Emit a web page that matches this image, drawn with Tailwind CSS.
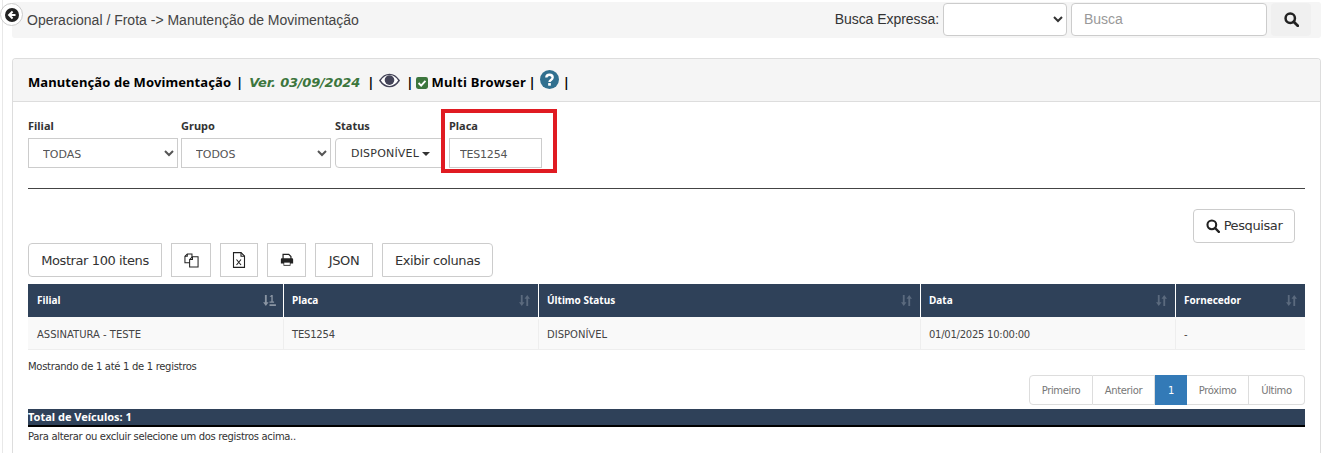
<!DOCTYPE html>
<html lang="pt-BR">
<head>
    <meta charset="UTF-8">
    <title>Manutenção de Movimentação</title>
    <script src="https://cdn.jsdelivr.net/npm/@tailwindcss/browser@4"></script>
</head>
<body class="bg-white h-[453px] overflow-hidden font-['DejaVu_Sans',sans-serif] text-[#333] relative">
    <!-- Linha lateral -->
    <div class="absolute left-[2px] top-0 bottom-0 w-px bg-[#e8e8e8]"></div>

    <!-- Botão voltar -->
    <div class="absolute left-0 top-[3px] w-[23px] h-[23px] rounded-full bg-white border border-[#ccc] flex items-center justify-center z-10">
        <svg viewBox="0 0 24 24" class="w-[14px] h-[14px]"><circle cx="12" cy="12" r="12" fill="#222"/><path d="M13 6 7 12l6 6M7.500 12H18" fill="none" stroke="#fff" stroke-width="3.400"/></svg>
    </div>

    <!-- Barra superior -->
    <div class="ml-[12px] mr-[4px] pt-[2px]">
        <div class="h-[36px] bg-[#f5f5f5] rounded-[3px] flex items-center justify-between pl-[15px] pr-[10px] font-['Liberation_Sans',sans-serif]">
            <span class="text-[14px] text-[#444]">Operacional / Frota -&gt; Manutenção de Movimentação</span>
            <div class="flex items-center h-[36px]">
                <span class="text-[14px] text-[#333] mr-[4px] -mt-[2px] tracking-[-0.05px]">Busca Expressa:</span>
                <select class="w-[124px] h-[33px] bg-white border border-[#ccc] rounded-[4px] mr-[4px] -mt-[2px] text-[14px]"><option></option></select>
                <input type="text" placeholder="Busca" class="w-[196px] h-[33px] bg-white border border-[#ccc] rounded-[4px] px-[12px] -mt-[2px] text-[14px] placeholder:text-[#999]">
                <button class="w-[40px] h-[33px] ml-[4px] -mt-[2px] bg-[#f0f0f0] rounded-[4px] flex items-center justify-center">
                    <svg viewBox="0 0 24 24" class="w-[15px] h-[15px]"><circle cx="10" cy="10" r="7.500" fill="none" stroke="#222" stroke-width="4"/><path d="m15.500 15.500 6.500 6.500" stroke="#222" stroke-width="4.400" stroke-linecap="round"/></svg>
                </button>
            </div>
        </div>
    </div>

    <!-- Painel -->
    <div class="ml-[12px] mr-[4px] mt-[20px] h-[395px] border border-b-0 border-[#ddd] rounded-t-[4px] overflow-hidden">
        <div class="h-[43px] bg-[#f5f5f5] border-b border-[#ddd] flex items-center pl-[15px] pt-[5px] text-[13px] font-bold text-black font-['Noto_Sans',sans-serif] whitespace-nowrap">
            <span class="w-[204px] tracking-[0.1px]">Manutenção de Movimentação</span>
            <span class="ml-[4px]">|</span>
            <span class="ml-[6px] italic text-[#3c763d] w-[111px] font-['DejaVu_Sans',sans-serif] tracking-[-0.2px]">Ver. 03/09/2024</span>
            <span class="ml-[7px]">|</span>
            <svg viewBox="0 0 24 16" class="w-[21px] h-[15px] ml-[5px] -mt-[5px]"><path d="M1 8c3-4.500 7-7 11-7s8 2.500 11 7c-3 4.500-7 7-11 7S4 12.500 1 8Z" fill="#fff" stroke="#444458" stroke-width="1.600"/><circle cx="12" cy="7.500" r="5.500" fill="#444458"/></svg>
            <span class="ml-[6px]">|</span>
            <svg viewBox="0 0 14 14" class="w-[12px] h-[12px] ml-[2px]"><rect width="14" height="14" rx="2.500" fill="#3c763d"/><path d="m3 7 3 3 5-5.500" fill="none" stroke="#fff" stroke-width="2.200"/></svg>
            <span class="ml-[4px] w-[94px] tracking-[0.3px]">Multi Browser</span>
            <span class="ml-[3px]">|</span>
            <svg viewBox="0 0 24 24" class="w-[19px] h-[19px] ml-[4px] -mt-[6px]"><circle cx="12" cy="12" r="12" fill="#31708f"/><path d="M8 9.500C8 7 10 6 12 6c2.500 0 4 1.500 4 3.500 0 3-4 3-4 5.500" fill="none" stroke="#fff" stroke-width="3"/><rect x="10.300" y="16.500" width="3.400" height="3.300" fill="#fff"/></svg>
            <span class="ml-[4px]">|</span>
        </div>

        <div class="px-[15px] relative">
            <!-- Filtros -->
            <div class="flex pt-[17px] text-[11px] text-[#333]">
                <div class="w-[153px]">
                    <label class="block font-bold font-['Noto_Sans',sans-serif] h-[19px] leading-[14px]">Filial</label>
                    <select class="w-[150px] h-[30px] bg-white border border-[#ccc] pl-[10px] pt-[2px] text-[11px] text-[#555]"><option>TODAS</option></select>
                </div>
                <div class="w-[154px]">
                    <label class="block font-bold font-['Noto_Sans',sans-serif] h-[19px] leading-[14px]">Grupo</label>
                    <select class="w-[150px] h-[30px] bg-white border border-[#ccc] pl-[10px] pt-[2px] text-[11px] text-[#555]"><option>TODOS</option></select>
                </div>
                <div class="w-[114px]">
                    <label class="block font-bold font-['Noto_Sans',sans-serif] h-[19px] leading-[14px]">Status</label>
                    <button class="w-[108px] h-[30px] bg-white border border-[#ccc] rounded-l-[4px] text-[11px] tracking-[0.2px] text-[#333] flex items-center pl-[15px] pt-[2px]">DISPONÍVEL<span class="ml-[3px] border-x-[4px] border-x-transparent border-t-[4px] border-t-[#333]"></span></button>
                </div>
                <div>
                    <label class="block font-bold font-['Noto_Sans',sans-serif] h-[19px] leading-[14px]">Placa</label>
                    <input type="text" value="TES1254" class="w-[93px] h-[30px] bg-white border border-[#ccc] pl-[10px] pt-[2px] text-[11px] tracking-[-0.2px] text-[#555]">
                </div>
            </div>
            <!-- Destaque vermelho -->
            <div class="absolute left-[428px] top-[7px] w-[116px] h-[64px] border-[4px] border-[#e01b22]"></div>

            <hr class="mt-[20px] border-t border-[#444]">

            <div class="flex justify-end pr-[10px] mt-[20px] h-[34px]">
                <button class="w-[102px] h-[34px] border border-[#ccc] rounded-[4px] bg-white text-[13px] tracking-[-0.4px] flex items-center justify-center gap-[4px]">
                    <svg viewBox="0 0 24 24" class="w-[14px] h-[14px]"><circle cx="10" cy="10" r="7.500" fill="none" stroke="#222" stroke-width="3.600"/><path d="m15.500 15.500 6.500 6.500" stroke="#222" stroke-width="4" stroke-linecap="round"/></svg>
                    Pesquisar
                </button>
            </div>

            <!-- Botões da tabela -->
            <div class="flex gap-[9px] h-[34px] text-[13px] tracking-[-0.4px] text-[#333]">
                <button class="w-[134px] border border-[#ccc] rounded-l-[4px] pt-[1px]">Mostrar 100 itens</button>
                <button class="w-[40px] border border-[#ccc] flex items-center justify-center">
                    <svg viewBox="0 0 16 16" class="w-[15px] h-[15px]" fill="#fff" stroke="#222" stroke-width="1.100"><path d="M1 3.500 3.500 1H8.500V10.500H1Z"/><path d="M6 7 9 4h6V15H6Z"/><path d="M3.500 1V3.500H1M9 4V7H6" fill="none"/></svg>
                </button>
                <button class="w-[38px] border border-[#ccc] flex items-center justify-center">
                    <svg viewBox="0 0 14 16" class="w-[14px] h-[16px]" fill="none" stroke="#222" stroke-width="1.100"><path d="M1.500.6H9l3.500 3.500V15.400H1.500Z"/><path d="M9 .6V4.200h3.500M4.500 7.500l4.500 5.500M9 7.500l-4.500 5.500"/></svg>
                </button>
                <button class="w-[39px] border border-[#ccc] flex items-center justify-center">
                    <svg viewBox="0 0 16 16" class="w-[14px] h-[14px]"><path d="M3.500 7V1.500H10L12.500 4V7" fill="none" stroke="#222" stroke-width="1.400"/><path d="M1 7.500C1 6.500 1.500 6 2.500 6h11c1 0 1.500.5 1.500 1.500V12h-3v2.500H4V12H1Z" fill="#222"/><rect x="4.800" y="11" width="6.400" height="2.600" fill="#fff"/></svg>
                </button>
                <button class="w-[58px] border border-[#ccc] pt-[1px]">JSON</button>
                <button class="w-[111px] border border-[#ccc] rounded-r-[4px] pt-[1px]">Exibir colunas</button>
            </div>

            <!-- Tabela -->
            <div class="mt-[7px] w-[1277px] text-[10px]">
                <div class="grid grid-cols-[256px_255px_382px_255px_129px] h-[33px] bg-[#2f4159] text-white font-bold font-['Noto_Sans',sans-serif]">
                    <div class="flex items-center justify-between pl-[9px] pr-[7px] border-r border-white">Filial
                        <svg viewBox="0 0 14 12" class="w-[13px] h-[11px]" fill="#8b95a3"><path d="M2 0h2v8h2L3 12 0 8h2Z"/><path d="M7 7h2V2H7l2-2h1.500v7H12v1.500H7ZM7 10h7v2H7Z"/></svg>
                    </div>
                    <div class="flex items-center justify-between pl-[8px] pr-[7px] border-r border-white">Placa
                        <svg viewBox="0 0 14 12" class="w-[13px] h-[11px]" fill="#5b6a7e"><path d="M3 0h2v8h2L4 12 1 8h2ZM9 12h2V4h2L10 0 7 4h2Z"/></svg>
                    </div>
                    <div class="flex items-center justify-between pl-[8px] pr-[7px] border-r border-white">Último Status
                        <svg viewBox="0 0 14 12" class="w-[13px] h-[11px]" fill="#5b6a7e"><path d="M3 0h2v8h2L4 12 1 8h2ZM9 12h2V4h2L10 0 7 4h2Z"/></svg>
                    </div>
                    <div class="flex items-center justify-between pl-[8px] pr-[7px] border-r border-white">Data
                        <svg viewBox="0 0 14 12" class="w-[13px] h-[11px]" fill="#5b6a7e"><path d="M3 0h2v8h2L4 12 1 8h2ZM9 12h2V4h2L10 0 7 4h2Z"/></svg>
                    </div>
                    <div class="flex items-center justify-between pl-[8px] pr-[7px]">Fornecedor
                        <svg viewBox="0 0 14 12" class="w-[13px] h-[11px]" fill="#5b6a7e"><path d="M3 0h2v8h2L4 12 1 8h2ZM9 12h2V4h2L10 0 7 4h2Z"/></svg>
                    </div>
                </div>
                <div class="grid grid-cols-[256px_255px_382px_255px_129px] h-[33px] pt-[2px] bg-[#f9f9f9] text-[#444] border-b border-[#eee]">
                    <div class="flex items-center pl-[9px] border-r border-[#eee]">ASSINATURA - TESTE</div>
                    <div class="flex items-center pl-[8px] border-r border-[#eee] tracking-[-0.2px]">TES1254</div>
                    <div class="flex items-center pl-[8px] border-r border-[#eee]">DISPONÍVEL</div>
                    <div class="flex items-center pl-[8px] border-r border-[#eee] tracking-[-0.25px]">01/01/2025 10:00:00</div>
                    <div class="flex items-center pl-[8px]">-</div>
                </div>
            </div>

            <div class="flex justify-between w-[1277px] h-[59px] text-[10px]">
                <span class="pt-[9px] text-[#333] tracking-[-0.3px]">Mostrando de 1 até 1 de 1 registros</span>
                <div class="flex h-[30px] mt-[25px] text-[#777] tracking-[-0.35px]">
                    <span class="w-[64px] border border-[#ddd] rounded-l-[4px] flex items-center justify-center">Primeiro</span>
                    <span class="w-[62px] border-y border-r border-[#ddd] flex items-center justify-center">Anterior</span>
                    <span class="w-[32px] bg-[#337ab7] text-white flex items-center justify-center">1</span>
                    <span class="w-[62px] border-y border-r border-[#ddd] flex items-center justify-center">Próximo</span>
                    <span class="w-[56px] border-y border-r border-[#ddd] rounded-r-[4px] flex items-center justify-center">Último</span>
                </div>
            </div>

            <div class="w-[1277px] h-[18px] bg-[#2f4159] border-b-[2px] border-black text-white text-[11px] font-bold font-['Noto_Sans',sans-serif] leading-[16px]">Total de Veículos: 1</div>
            <p class="text-[10px] text-[#333] mt-[2px] tracking-[-0.34px]">Para alterar ou excluir selecione um dos registros acima..</p>
        </div>
    </div>
</body>
</html>
